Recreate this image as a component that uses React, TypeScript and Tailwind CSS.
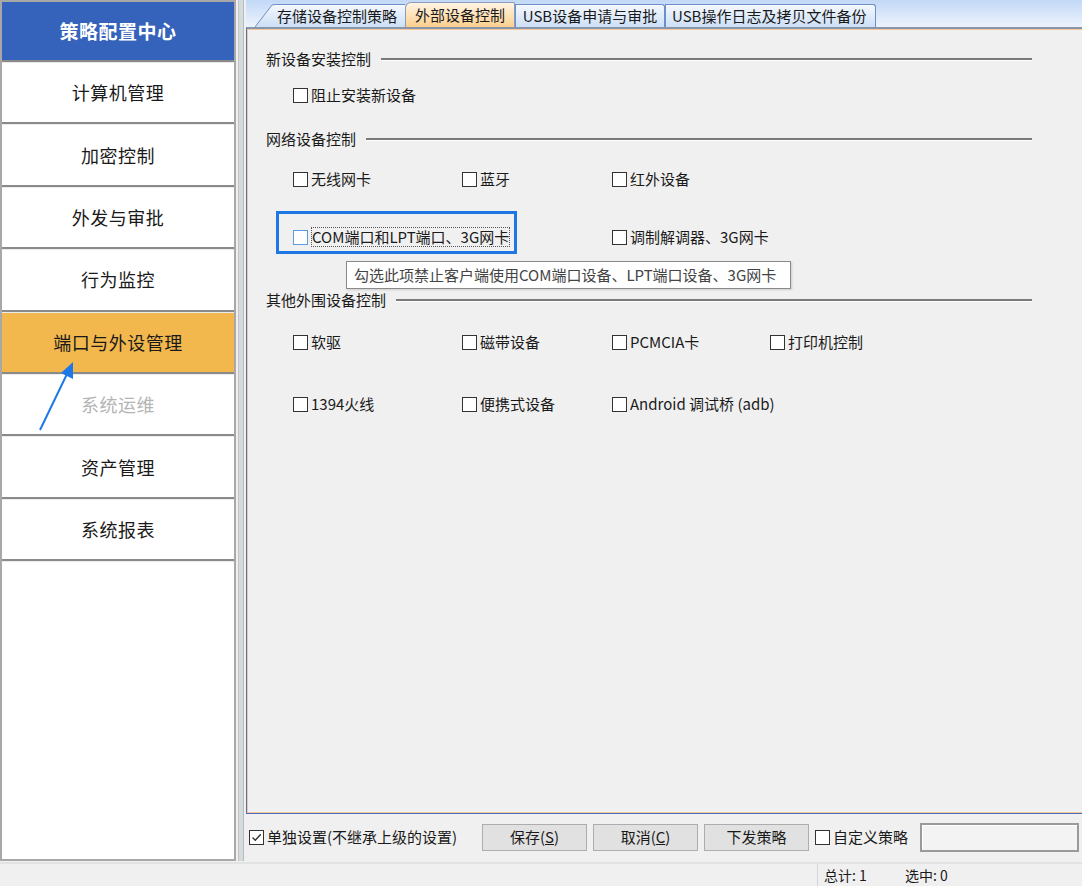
import React from 'react';

const menu = [
  { label: '计算机管理' },
  { label: '加密控制' },
  { label: '外发与审批' },
  { label: '行为监控' },
  { label: '端口与外设管理', active: true },
  { label: '系统运维', disabled: true },
  { label: '资产管理' },
  { label: '系统报表' },
];

function Box({ checked, hover }: { checked?: boolean; hover?: boolean }) {
  return (
    <span
      className={`w-[15px] h-[15px] shrink-0 border bg-white flex items-center justify-center ${
        hover ? 'border-[#5b9be0]' : 'border-[#333]'
      }`}
    >
      {checked && (
        <svg width="11" height="11" viewBox="0 0 11 11">
          <path d="M1.5 5.5 L4.3 8.3 L9.8 2.2" fill="none" stroke="#333" strokeWidth="1.4" />
        </svg>
      )}
    </span>
  );
}

function Check({ label, checked, hover, focus }: { label: string; checked?: boolean; hover?: boolean; focus?: boolean }) {
  return (
    <div className="flex items-center gap-[3px] text-[15px] leading-[20px] text-[#1a1a1a] whitespace-nowrap">
      <Box checked={checked} hover={hover} />
      <span className={focus ? 'border border-dotted border-[#555] leading-[18px]' : ''}>{label}</span>
    </div>
  );
}

function Header({ title }: { title: string }) {
  return (
    <div className="flex items-center h-[20px] pl-[17px] pr-[50px]">
      <span className="text-[15px] leading-[20px] text-[#1a1a1a] whitespace-nowrap">{title}</span>
      <div className="flex-1 ml-[10px] flex flex-col">
        <div className="h-[2px] bg-[#7a7a7a]" />
        <div className="h-[1px] bg-white" />
      </div>
    </div>
  );
}

function Row({ items, className }: { items: React.ReactNode[]; className: string }) {
  const widths = ['w-[169px]', 'w-[150px]', 'w-[158px]', 'w-[150px]'];
  return (
    <div className={`flex h-[20px] pl-[44px] ${className}`}>
      {items.map((it, i) => (
        <div key={i} className={`${widths[i]} shrink-0`}>
          {it}
        </div>
      ))}
    </div>
  );
}

export default function App() {
  return (
    <div className="relative w-[1082px] h-[886px] overflow-hidden bg-[#f0f0f0] flex flex-col font-['Noto_Sans_CJK_SC','Liberation_Sans',sans-serif]">
      <div className="flex h-[862px]">
        {/* 左侧菜单 */}
        <div className="w-[236px] h-[861px] border-2 border-[#a8a8a8] bg-white flex flex-col">
          <div className="h-[58px] bg-[#3563bb] flex items-center justify-center text-white text-[19px] font-bold tracking-[0.5px]">
            策略配置中心
          </div>
          <div className="h-[3px] border-t-2 border-[#8a8a8a] bg-[#e8e8e8]" />
          {menu.map((m) => (
            <div key={m.label} className="flex flex-col">
              <div
                className={`h-[59.4px] flex items-center justify-center text-[18px] tracking-[0.5px] ${
                  m.active ? 'bg-[#f2b84e] text-[#1a1a1a]' : m.disabled ? 'text-[#b4b4b4]' : 'text-[#1a1a1a]'
                }`}
              >
                {m.label}
              </div>
              <div className="h-[3px] border-t-2 border-[#8a8a8a] bg-[#ececec]" />
            </div>
          ))}
        </div>

        {/* 分隔条 */}
        <div className="w-[10px] h-[861px] flex">
          <div className="w-[2px] bg-[#f0f0f0]" />
          <div className="w-[1px] bg-[#c4c4c8]" />
          <div className="w-[4px] bg-[#d3dcdc]" />
          <div className="w-[1px] bg-[#b8bcc0]" />
          <div className="w-[2px] bg-[#f0f0f0]" />
        </div>

        {/* 主区域 */}
        <div className="flex-1 flex flex-col">
          {/* 选项卡 */}
          <div className="h-[27px] bg-gradient-to-b from-[#c2d8f7] to-[#edf3fc] flex items-end pl-[9px]">
            <div className="relative w-[150px] h-[23px] flex">
              <svg width="20" height="23" viewBox="0 0 20 23" className="shrink-0">
                <defs>
                  <linearGradient id="tg" x1="0" y1="0" x2="0" y2="1">
                    <stop offset="0" stopColor="#f4f8fe" />
                    <stop offset="1" stopColor="#cddff6" />
                  </linearGradient>
                </defs>
                <polygon points="0,23 17,1 20,0.5 20,23" fill="url(#tg)" />
                <polyline points="0,23 17,1 20,0.5" fill="none" stroke="#6d8fc9" strokeWidth="1" />
              </svg>
              <div className="flex-1 border-t border-[#6d8fc9] bg-gradient-to-b from-[#f4f8fe] to-[#cddff6] text-[15px] leading-[21px] text-[#1a1a1a] pl-[2px] whitespace-nowrap">
                存储设备控制策略
              </div>
            </div>
            <div className="w-[110px] h-[25px] border border-b-0 border-[#8a9cbc] rounded-tl-[6px] rounded-tr-[2px] bg-gradient-to-b from-[#fff4e4] to-[#fbcf8c] text-[15px] leading-[23px] text-[#1a1a1a] text-center whitespace-nowrap">
              外部设备控制
            </div>
            <div className="w-[150px] h-[23px] border border-b-0 border-[#6d8fc9] rounded-tr-[3px] bg-gradient-to-b from-[#f4f8fe] to-[#cddff6] text-[15px] leading-[21px] text-[#1a1a1a] text-center whitespace-nowrap">
              USB设备申请与审批
            </div>
            <div className="w-[211px] h-[23px] border border-b-0 border-l-0 border-[#6d8fc9] rounded-tr-[3px] bg-gradient-to-b from-[#f4f8fe] to-[#cddff6] text-[15px] leading-[21px] text-[#1a1a1a] text-center whitespace-nowrap">
              <span className="border-l border-[#6d8fc9] pl-[6px] block h-full text-left">USB操作日志及拷贝文件备份</span>
            </div>
          </div>

          {/* 面板 */}
          <div className="relative h-[787px] border-t-2 border-t-[#8896ab] border-l border-l-[#4a6fb8] border-b border-b-[#4a6fb8]">
            <div className="h-full border-t border-t-[#f6c89a] border-l border-l-[#f6c89a] border-b border-b-[#f6c89a] flex flex-col pl-[1px]">
              <div className="mt-[19px]">
                <Header title="新设备安装控制" />
              </div>
              <Row className="mt-[16px]" items={[<Check label="阻止安装新设备" />]} />
              <div className="mt-[24px]">
                <Header title="网络设备控制" />
              </div>
              <Row
                className="mt-[20px]"
                items={[<Check label="无线网卡" />, <Check label="蓝牙" />, <Check label="红外设备" />]}
              />
              <Row
                className="mt-[38px]"
                items={[
                  <div className="w-[319px]">
                    <Check label="COM端口和LPT端口、3G网卡" hover focus />
                  </div>,
                  <span />,
                  <Check label="调制解调器、3G网卡" />,
                ]}
              />
              <div className="mt-[43px]">
                <Header title="其他外围设备控制" />
              </div>
              <Row
                className="mt-[22px]"
                items={[
                  <Check label="软驱" />,
                  <Check label=" 磁带设备" />,
                  <Check label="PCMCIA卡" />,
                  <Check label="打印机控制" />,
                ]}
              />
              <Row
                className="mt-[42px]"
                items={[<Check label="1394火线" />, <Check label="便携式设备" />, <Check label="Android 调试桥 (adb)" />]}
              />
            </div>

            {/* 高亮框 */}
            <div className="absolute left-[29px] top-[182px] w-[241px] h-[43px] border-[3px] border-[#1d78e6]" />
            {/* 提示 */}
            <div className="absolute left-[99px] top-[232px] w-[445px] h-[28px] bg-white border border-[#8a8a8a] shadow-[1px_1px_2px_rgba(0,0,0,0.15)] text-[15px] leading-[26px] text-[#444] pl-[7px] whitespace-nowrap">
              勾选此项禁止客户端使用COM端口设备、LPT端口设备、3G网卡
            </div>
          </div>

          {/* 底部操作栏 */}
          <div className="flex-1 flex items-center pl-[3px] pb-[2px]">
            <div className="w-[233px] shrink-0">
              <Check label="单独设置(不继承上级的设置)" checked />
            </div>
            <div className="flex gap-[6px]">
              <button className="w-[105px] h-[27px] bg-[#e1e1e1] border border-[#adadad] text-[15px] text-[#1a1a1a]">
                保存(<span className="underline">S</span>)
              </button>
              <button className="w-[105px] h-[27px] bg-[#e1e1e1] border border-[#adadad] text-[15px] text-[#1a1a1a]">
                取消(<span className="underline">C</span>)
              </button>
              <button className="w-[105px] h-[27px] bg-[#e1e1e1] border border-[#adadad] text-[15px] text-[#1a1a1a]">
                下发策略
              </button>
            </div>
            <div className="ml-[6px] w-[105px] shrink-0">
              <Check label="自定义策略" />
            </div>
            <div className="w-[159px] h-[29px] border-2 border-[#9a9a9a] bg-[#f3f3f3] shadow-[inset_1px_1px_0_#ffffff]" />
          </div>
        </div>
      </div>

      {/* 状态栏 */}
      <div className="flex-1 border-t-2 border-[#e2e2e2] flex items-center text-[14px] text-[#1a1a1a]">
        <div className="w-[817px] shrink-0" />
        <div className="h-full border-l border-[#d6d6d6] pl-[6px] w-[88px] flex items-center">总计: 1</div>
        <div className="flex items-center">选中: 0</div>
      </div>

      {/* 箭头 */}
      <svg className="absolute left-0 top-0 pointer-events-none" width="120" height="450" viewBox="0 0 120 450">
        <line x1="40" y1="430" x2="67" y2="374" stroke="#1e78e8" strokeWidth="2" />
        <polygon points="73,362 61,373 73,379" fill="#1e78e8" />
      </svg>
    </div>
  );
}
